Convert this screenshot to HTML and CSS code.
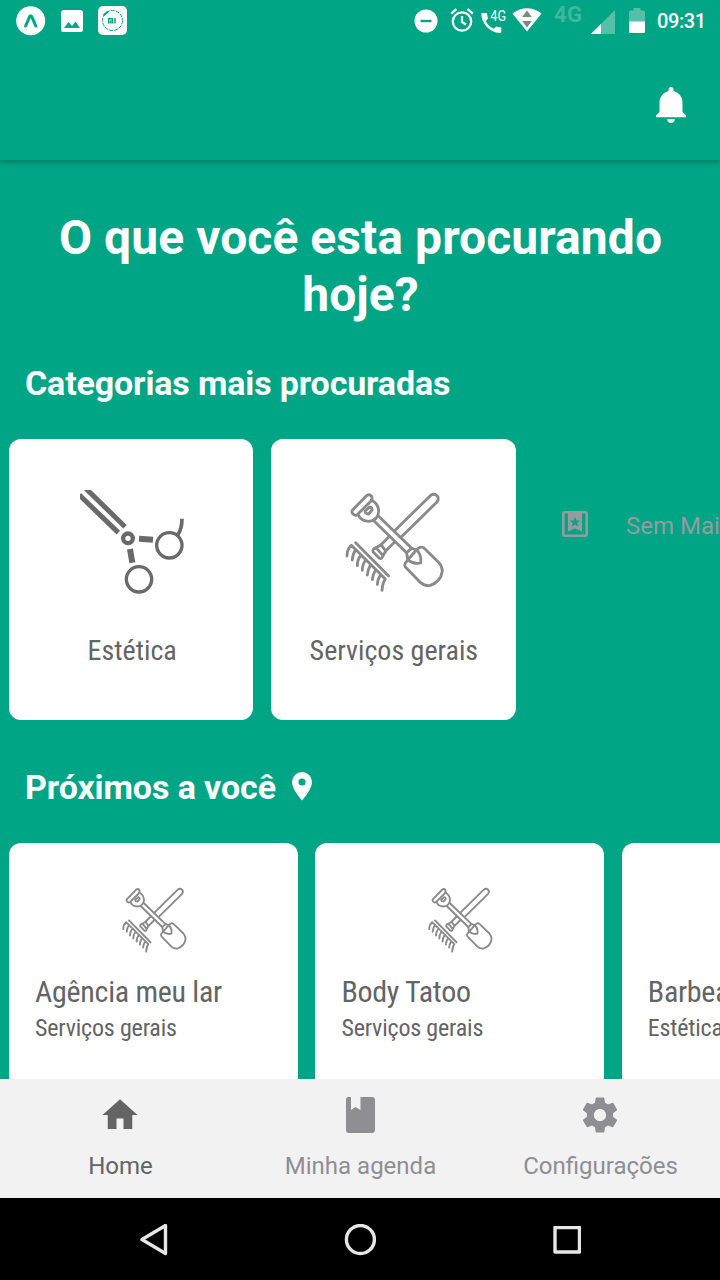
FILE: index.html
```html
<!DOCTYPE html>
<html lang="pt-BR">
<head>
<meta charset="utf-8">
<title>Home</title>
<link rel="stylesheet" href="styles.css">
</head>
<body>
<svg class="defs" width="0" height="0">
  <symbol id="tools" viewBox="50 60 312 312">
    <g fill="none" stroke="#8a8a8a" stroke-width="8.5" stroke-linejoin="round" stroke-linecap="round">
      <path d="M230 199 335 96Q343 84 334 76Q324 69 315 77L208 182M191 200 167 224M208 216 181 243"/>
      <path d="M167 224 152 233Q140 238 143 245L162 265Q168 268 171 261L181 243ZM152 233 173 257"/>
      <path d="M146 153 244 248M160 139 259 235"/>
      <path d="M81 121 125 76Q133 71 139 79Q142 85 138 92L97 133Q90 139 83 132Q78 127 81 121Z"/>
      <path d="M138 90Q160 102 160 124Q158 152 130 154Q108 154 98 134"/>
      <path d="M119 124 133 111Q142 113 140 120L130 132Q120 131 119 124Z"/>
      <path d="M244 248 247 270Q268 284 286 279Q290 256 274 240L259 235ZM247 270 268 246"/>
      <path d="M273 239 284 232Q292 229 299 237L341 278Q351 290 351 304Q346 337 313 347Q297 348 286 338L240 291Q236 285 240 279L247 271"/>
      <path d="M91 218 190 318M65 258Q65 237 78 226L180 327Q172 337 170 361M81 270Q82 252 91 239M96 287Q96 269 106 256M111 301Q111 283 121 270M126 315Q127 298 136 284M141 329Q142 313 151 299M156 343Q157 327 166 314"/>
    </g>
  </symbol>
</svg>
<div class="screen">
  <div class="statusbar">
    <svg class="expo" width="30" height="30" viewBox="0 0 30 30"><circle cx="14.7" cy="14.7" r="14.5" fill="#fff"/><path d="M9.6 20 13.6 10.6Q14.7 8.8 15.8 10.6L19.8 20" fill="none" stroke="#00a585" stroke-width="3" stroke-linecap="round"/></svg>
    <svg class="photo" width="22" height="22" viewBox="0 0 22 22"><rect width="22" height="22" rx="2.5" fill="#fff"/><path d="M3 18 7.5 12 11 16 14.5 11.5 19 18Z" fill="#00a585"/></svg>
    <svg class="mi" width="29" height="29" viewBox="0 0 29 29"><rect width="29" height="29" rx="5" fill="#fff"/><circle cx="14.5" cy="14.5" r="10" fill="none" stroke="#00a585" stroke-dasharray="4 1"/><path d="M5.5 9.5 10 5.5" stroke="#00a585" stroke-width="2"/><path d="M10.7 17.5V12.7H14.4V17.5M12.6 14.5V17.5M17 12V17.5" fill="none" stroke="#00a585" stroke-width="1.5"/></svg>
    <svg class="dnd" width="24" height="24" viewBox="0 0 24 24"><circle cx="12" cy="12" r="11.5" fill="#fff"/><path d="M6.5 12H17.5" stroke="#00a585" stroke-width="2.4"/></svg>
    <svg class="alarm" width="24" height="24" viewBox="0 0 24 24"><g fill="none" stroke="#fff" stroke-width="2.3"><circle cx="12" cy="13.5" r="9.2"/><path d="M12 8V14L16 16.5M1.2 5.6 6.4 1.2M22.8 5.6 17.6 1.2"/></g></svg>
    <svg class="call" width="27" height="26" viewBox="0 0 27 26"><path d="M1.2 5H5.2Q6 5 6.2 5.9 6.3 8.2 7 10.5L4.8 13.2Q8 18.7 12.8 20.8L15.2 18.5Q17.2 19.3 19.4 19.3 20.3 19.4 20.3 20.3V24.1Q20.3 24.9 19.4 24.9 11 25.1 5 18 .4 12.2.3 6 .3 5.1 1.2 5Z" fill="#fff"/><text class="call-text" x="9.3" y="13.2" textLength="15.8" lengthAdjust="spacingAndGlyphs">4G</text></svg>
    <svg class="wifi" width="30" height="24" viewBox="0 0 30 24"><path d="M.4 5.5Q15-5 29.6 5.5L15 23.5Z" fill="#fff"/><path d="M10.2 9 15 2.5 19.8 9ZM10.2 13H19.8L15 19.5Z" fill="#7b8784"/></svg>
    <span class="network">4G</span>
    <svg class="signal" width="24" height="24" viewBox="0 0 24 24"><path d="M0 24 24 0V24Z" fill="#55c0aa"/><path d="M0 24 10 14V24Z" fill="#fff"/></svg>
    <svg class="battery" width="16" height="25" viewBox="0 0 16 25"><path d="M0 4Q0 2.5 1.5 2.5H4.5V0H11.5V2.5H14.5Q16 2.5 16 4V14H0Z" fill="#55c0aa"/><path d="M0 13.5H16V24Q16 25 15 25H1Q0 25 0 24Z" fill="#fff"/></svg>
    <span class="clock">09:31</span>
  </div>
  <header class="header">
    <svg width="30" height="37" viewBox="0 0 30 37"><path d="M15 0Q17.5 0 17.5 3V4Q26.5 6.5 26.5 16V25L30 28.5V30.3H0V28.5L3.5 25V16Q3.5 6.5 12.5 4V3Q12.5 0 15 0ZM11 32.3H19Q18.3 36 15 36 11.7 36 11 32.3Z" fill="#fff"/></svg>
  </header>
  <main class="content">
    <h1 class="title">O que você esta procurando hoje?</h1>
    <h2 class="section">Categorias mais procuradas</h2>
    <div class="categories">
      <div class="category">
        <svg class="category-icon shears" viewBox="60 60 312 312"><g fill="none" stroke="#6a6a6a"><path d="M58 75 175 188M78 56 195 170" stroke-width="15"/><circle cx="204" cy="205" r="14.5" stroke-width="13"/><path d="M237 206 279 209M210 237 217 278" stroke-width="18"/><circle cx="237" cy="328" r="38" stroke-width="10"/><circle cx="328" cy="226" r="38" stroke-width="10"/><path d="M353 196Q366 175 366 146" stroke-width="11"/></g></svg>
        <span class="category-name">Estética</span>
      </div>
      <div class="category">
        <svg class="category-icon tools"><use href="#tools"/></svg>
        <span class="category-name">Serviços gerais</span>
      </div>
      <div class="more">
        <svg width="26" height="26" viewBox="0 0 26 26"><rect x="1.3" y="1.3" width="23.4" height="23.4" rx="1.5" fill="none" stroke="#979a9f" stroke-width="2.6"/><path d="M6 2H20V20.5L13 17.5 6 20.5Z" fill="#979a9f"/><path d="M13 5.8 14.4 9.5 18.2 9.6 15.2 12 16.3 15.7 13 13.5 9.7 15.7 10.8 12 7.8 9.6 11.6 9.5Z" fill="#00a585"/></svg>
        <span>Sem Mais</span>
      </div>
    </div>
    <h2 class="section near">Próximos a você
      <svg width="20" height="29" viewBox="0 0 20 29"><path fill-rule="evenodd" d="M10 0A10 10 0 0 1 20 10Q20 17 10 28.5 0 17 0 10A10 10 0 0 1 10 0ZM10 6.4A3.6 3.6 0 1 0 10 13.6 3.6 3.6 0 1 0 10 6.4Z" fill="#fff"/></svg>
    </h2>
    <div class="places">
      <div class="place"><svg class="place-icon"><use href="#tools"/></svg><div class="place-name">Agência meu lar</div><div class="place-kind">Serviços gerais</div></div>
      <div class="place"><svg class="place-icon"><use href="#tools"/></svg><div class="place-name">Body Tatoo</div><div class="place-kind">Serviços gerais</div></div>
      <div class="place"><div class="place-icon"></div><div class="place-name">Barbearia</div><div class="place-kind">Estética</div></div>
    </div>
  </main>
  <nav class="tabs">
    <div class="tab active"><svg width="42" height="42" viewBox="0 0 24 24"><path d="M10 20v-6h4v6h5v-8h3L12 3 2 12h3v8z"/></svg><span>Home</span></div>
    <div class="tab"><svg width="42" height="42" viewBox="0 0 42 42"><path d="M9 3H12V16L16.5 13 21.5 16V3H33Q36 3 36 6V36Q36 39 33 39H10Q7 39 7 36V6Q7 3 9 3Z"/></svg><span>Minha agenda</span></div>
    <div class="tab"><svg width="42" height="42" viewBox="0 0 24 24"><path d="M19.43 12.98c.04-.32.07-.64.07-.98s-.03-.66-.07-.98l2.11-1.65c.19-.15.24-.42.12-.64l-2-3.46c-.12-.22-.39-.3-.61-.22l-2.49 1c-.52-.4-1.08-.73-1.69-.98l-.38-2.65C14.46 2.18 14.25 2 14 2h-4c-.25 0-.46.18-.49.42l-.38 2.65c-.61.25-1.17.59-1.69.98l-2.49-1c-.23-.09-.49 0-.61.22l-2 3.46c-.13.22-.07.49.12.64l2.11 1.65c-.04.32-.07.65-.07.98s.03.66.07.98l-2.11 1.65c-.19.15-.24.42-.12.64l2 3.46c.12.22.39.3.61.22l2.49-1c.52.4 1.08.73 1.69.98l.38 2.65c.03.24.24.42.49.42h4c.25 0 .46-.18.49-.42l.38-2.65c.61-.25 1.17-.59 1.69-.98l2.49 1c.23.09.49 0 .61-.22l2-3.46c.12-.22.07-.49-.12-.64zM12 15.5c-1.93 0-3.5-1.57-3.5-3.5s1.57-3.5 3.5-3.5 3.5 1.57 3.5 3.5-1.57 3.5-3.5 3.5z"/></svg><span>Configurações</span></div>
  </nav>
  <div class="navbar">
    <svg width="28" height="32" viewBox="0 0 28 32"><path d="M25.5 1.5V29.5L2 15.5Z"/></svg>
    <svg width="32" height="32" viewBox="0 0 32 32"><circle cx="16.4" cy="15.5" r="14"/></svg>
    <svg width="28" height="28" viewBox="0 0 28 28"><rect x="2" y="1.5" width="24.5" height="24.5"/></svg>
  </div>
</div>
</body>
</html>
```
FILE: styles.css
```css
* { box-sizing: border-box; }
body { margin: 0; font-family: Roboto, sans-serif; }
svg { display: block; flex: none; }
.defs { position: absolute; }
.screen { width: 720px; height: 1280px; display: flex; flex-direction: column; overflow: hidden; background: #00a585; }
.statusbar { height: 50px; flex: none; display: flex; align-items: flex-start; padding: 6px 0 0 16px; color: #fff; }
.photo { margin: 4px 0 0 15px; }
.mi { margin-left: 15px; }
.dnd { margin: 3px 0 0 287px; }
.alarm { margin: 2px 0 0 12px; }
.call { margin: 2px 0 0 7px; }
.call-text { font: 15px Roboto, sans-serif; fill: #fff; }
.wifi { margin: 2px 0 0 4px; }
.network { width: 28px; margin: -4px 0 0 12px; font-size: 22px; line-height: 26px; font-weight: 700; letter-spacing: .5px; color: #40b89f; }
.signal { margin: 4px 0 0 9px; }
.battery { margin: 2px 0 0 14px; }
.clock { margin: 3px 0 0 12px; font-size: 20px; line-height: 25px; font-weight: 500; letter-spacing: -.4px; white-space: nowrap; }
.header { height: 110px; flex: none; display: flex; justify-content: flex-end; padding: 37px 34px 0 0; box-shadow: 0 1px 6px rgba(0, 0, 0, .34); clip-path: inset(0 0 -10px 0); }
.content { flex: 1; min-height: 0; overflow: hidden; padding-top: 49px; }
.title { margin: 0; padding: 0 19px 0 20px; font-size: 48px; line-height: 57px; font-weight: 700; letter-spacing: .06px; color: #fff; text-align: center; }
.section { margin: 40px 0 0 25px; font-size: 34px; line-height: 40px; font-weight: 700; letter-spacing: -.14px; color: #fff; }
.categories { display: flex; gap: 17.8px; margin-top: 36px; padding-left: 9px; }
.category { width: 244.4px; height: 281px; flex: none; border-radius: 12px; background: #fff; display: flex; flex-direction: column; align-items: center; padding-top: 51px; }
.category-icon { width: 104px; height: 104px; }
.shears { margin-left: 2px; }
.tools { margin-left: 1px; }
.category-name { margin: 40px 0 0 1px; font-family: "Roboto Condensed", Roboto, sans-serif; font-stretch: 75%; font-size: 28px; line-height: 34px; color: #646464; white-space: nowrap; }
.shears + .category-name { margin-left: 2px; }
.more { display: flex; align-items: flex-start; gap: 38px; padding: 72px 0 0 28.6px; color: #979a9f; font-size: 24px; line-height: 30px; white-space: nowrap; }
.near { display: flex; align-items: center; gap: 16.5px; margin-top: 47px; letter-spacing: -.1px; }
.near svg { margin-top: -2px; }
.places { display: flex; gap: 17.4px; margin-top: 36px; padding-left: 9px; }
.place { width: 289px; height: 290px; flex: none; border-radius: 12px; background: #fff; padding: 43px 26px 0; color: #646464; font-family: "Roboto Condensed", Roboto, sans-serif; font-stretch: 75%; white-space: nowrap; }
.place-icon { width: 68px; height: 68px; margin: 0 auto; }
.place-name { margin-top: 21px; font-size: 30px; line-height: 34px; letter-spacing: -.28px; }
.place-kind { margin-top: 4px; font-size: 24px; line-height: 30px; letter-spacing: -.18px; }
.tabs { height: 119px; flex: none; display: grid; grid-template-columns: repeat(3, 1fr); background: #f2f2f2; color: #8e8e93; }
.tab { display: flex; flex-direction: column; align-items: center; gap: 16px; padding-top: 15px; font-size: 24px; line-height: 28px; fill: currentColor; }
.tab span { padding-left: 1px; }
.active { color: #646464; }
.navbar { height: 82px; flex: none; display: flex; align-items: center; padding: 1px 0 0 139.5px; background: #000; fill: none; stroke: #e6e6e6; stroke-width: 3.4; stroke-linejoin: round; }
.navbar svg + svg { margin-left: 176.5px; }
```
